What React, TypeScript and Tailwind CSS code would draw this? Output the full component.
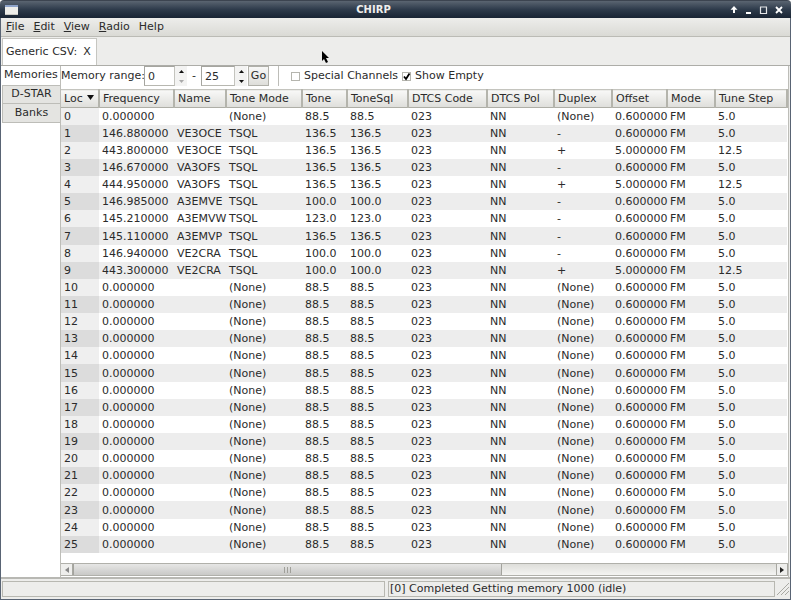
import { useState } from "react";

type Row = string[];

const columns: { label: string; width: string }[] = [
  { label: "Loc", width: "w-[38px]" },
  { label: "Frequency", width: "w-[75px]" },
  { label: "Name", width: "w-[52px]" },
  { label: "Tone Mode", width: "w-[76px]" },
  { label: "Tone", width: "w-[45px]" },
  { label: "ToneSql", width: "w-[61px]" },
  { label: "DTCS Code", width: "w-[79px]" },
  { label: "DTCS Pol", width: "w-[67px]" },
  { label: "Duplex", width: "w-[58px]" },
  { label: "Offset", width: "w-[55px]" },
  { label: "Mode", width: "w-[48px]" },
  { label: "Tune Step", width: "w-auto" },
];

const programmed: Row[] = [
  ["146.880000", "VE3OCE", "136.5", "-"],
  ["443.800000", "VE3OCE", "136.5", "+"],
  ["146.670000", "VA3OFS", "136.5", "-"],
  ["444.950000", "VA3OFS", "136.5", "+"],
  ["146.985000", "A3EMVE", "100.0", "-"],
  ["145.210000", "A3EMVW", "123.0", "-"],
  ["145.110000", "A3EMVP", "136.5", "-"],
  ["146.940000", "VE2CRA", "100.0", "-"],
  ["443.300000", "VE2CRA", "100.0", "+"],
];

const rows: Row[] = Array.from({ length: 26 }, (_, loc) => {
  const p = programmed[loc - 1];
  if (!p) {
    return [String(loc), "0.000000", "", "(None)", "88.5", "88.5", "023", "NN", "(None)", "0.600000", "FM", "5.0"];
  }
  const [freq, name, tone, duplex] = p;
  const up = duplex === "+";
  return [String(loc), freq, name, "TSQL", tone, tone, "023", "NN", duplex, up ? "5.000000" : "0.600000", "FM", up ? "12.5" : "5.0"];
});

function TitleBar() {
  return (
    <header className="flex h-[18px] shrink-0 items-center rounded-t-[4px] border-t border-[#3c4450] bg-linear-to-b from-[#5b6571] via-[#2e3b4b] to-[#192534] pr-[7px] pl-[5px]">
      <svg width="13" height="10" viewBox="0 0 13 10" aria-hidden="true">
        <rect width="13" height="10" fill="#eeeeea" />
        <rect width="13" height="2" fill="#8ea3c9" />
        <rect y="9" width="13" height="1" fill="#c9c9c4" />
      </svg>
      <h1 className="flex-1 pt-px text-center text-[10px] leading-[16px] font-bold text-[#eeeeec]">CHIRP</h1>
      <div className="flex gap-[5px]">
        <button aria-label="Shade" className="size-[10px]">
          <svg width="10" height="10" viewBox="0 0 10 10"><path d="M5 1L8.500 4.800H6V8H4V4.800H1.500z" fill="#fff" /></svg>
        </button>
        <button aria-label="Minimize" className="size-[10px]">
          <svg width="10" height="10" viewBox="0 0 10 10"><path d="M2 7h5v2H2z" fill="#fff" /></svg>
        </button>
        <button aria-label="Maximize" className="size-[10px]">
          <svg width="10" height="10" viewBox="0 0 10 10"><path d="M1 2h7M1.500 2v6.500h6V2" stroke="#e4e6e8" strokeWidth="1.200" fill="none" /></svg>
        </button>
        <button aria-label="Close" className="size-[10px]">
          <svg width="10" height="10" viewBox="0 0 10 10"><path d="M2 2l6 6M8 2L2 8" stroke="#fff" strokeWidth="1.800" /></svg>
        </button>
      </div>
    </header>
  );
}

function Spin({ label, initial, width, low }: { label: string; initial: number; width: string; low?: boolean }) {
  const [value, setValue] = useState(initial);
  return (
    <div className="flex h-5 bg-[#f3f3f2]">
      <input
        aria-label={label}
        value={value}
        onChange={(e) => setValue(Number(e.target.value) || 0)}
        className={"h-5 border border-t-[#a5a59f] border-r-[#c4c4be] border-b-[#b7b7b0] border-l-[#a5a59f] bg-white pl-[3px] text-[11px] outline-none " + width}
      />
      <div className="flex w-3 flex-col">
        <button aria-label={label + " up"} onClick={() => setValue(value + 1)} className="flex h-[10px] items-center justify-center">
          <svg width="5" height="3" viewBox="0 0 5 3"><path d="M0 3L2.500 0L5 3z" fill="#111" /></svg>
        </button>
        <button aria-label={label + " down"} onClick={() => setValue(Math.max(0, value - 1))} className="flex h-[10px] items-center justify-center">
          <svg width="5" height="3" viewBox="0 0 5 3"><path d="M0 0L2.500 3L5 0z" fill={low ? "#aaa" : "#111"} /></svg>
        </button>
      </div>
    </div>
  );
}

function Check({ label, initial }: { label: string; initial: boolean }) {
  const [on, setOn] = useState(initial);
  return (
    <label className="flex items-center gap-1">
      <span className="relative size-[9px]">
        <input
          type="checkbox"
          checked={on}
          onChange={() => setOn(!on)}
          className="block size-[9px] appearance-none border border-[#b5b5ae] bg-white"
        />
        {on && (
          <svg className="pointer-events-none absolute inset-0" width="9" height="9" viewBox="0 0 9 9">
            <path d="M2 4.500L4 7L7.500 1.500" stroke="#000" strokeWidth="1.800" fill="none" />
          </svg>
        )}
      </span>
      <span>{label}</span>
    </label>
  );
}

function MemoryTable() {
  return (
    <table className="w-full table-fixed border-collapse">
      <thead>
        <tr className="h-[18px]">
          {columns.map((c, i) => (
            <th
              key={c.label}
              className={
                "border-t border-r-2 border-b border-t-[#c4c4be] border-r-[#b4b4ac] border-b-[#aeaea6] bg-linear-to-b from-[#f8f8f7] to-[#dededa] p-0 pl-[3px] text-left leading-[16px] font-normal whitespace-nowrap " +
                c.width
              }
            >
              {c.label}
              {i === 0 && (
                <svg className="ml-1 inline-block align-[2px]" width="7" height="5" viewBox="0 0 7 5">
                  <path d="M0 0h7L3.500 5z" fill="#111" />
                </svg>
              )}
            </th>
          ))}
        </tr>
      </thead>
      <tbody>
        {rows.map((r) => (
          <tr key={r[0]} className="h-[17px] even:bg-[#ededed] nth-[8n]:h-[18px]">
            {r.map((v, i) => (
              <td
                key={i}
                className={
                  "p-0 pl-[3px] leading-[17px] whitespace-nowrap " +
                  (i === 0 ? "bg-[#efefef] in-[tr:nth-child(even)]:bg-[#dcdcdc]" : "")
                }
              >
                {v}
              </td>
            ))}
          </tr>
        ))}
      </tbody>
    </table>
  );
}

function ScrollBar() {
  return (
    <div className="flex h-[13px] border-y border-[#b0b0aa] bg-linear-to-b from-[#dededa] to-[#f4f4f2]">
      <button aria-label="Scroll left" className="flex w-3 items-center justify-center border-r border-[#a8a8a2] bg-[#eeeeec]">
        <svg width="4" height="6" viewBox="0 0 4 6"><path d="M4 0v6L0 3z" fill="#888" /></svg>
      </button>
      <div className="flex w-[59%] items-center justify-center gap-[2px] border-x border-[#a3a39d] bg-linear-to-b from-[#e6e6e5] to-[#c9c9c7]">
        <i className="h-[6px] w-px bg-[#a0a09a]" />
        <i className="h-[6px] w-px bg-[#a0a09a]" />
        <i className="h-[6px] w-px bg-[#a0a09a]" />
      </div>
      <button aria-label="Scroll right" className="ml-auto flex w-3 items-center justify-center border-x border-[#a8a8a2] bg-[#eeeeec]">
        <svg width="4" height="6" viewBox="0 0 4 6"><path d="M0 0v6L4 3z" fill="#222" /></svg>
      </button>
    </div>
  );
}

export default function App() {
  return (
    <div className="relative flex min-h-screen flex-col bg-white font-['DejaVu_Sans',sans-serif] text-[11px] text-[#2b2b2b]">
      <TitleBar />
      <div className="flex flex-1 flex-col border-x border-b border-[#596474] bg-[#ededeb]">
        <nav className="flex h-[19px] shrink-0 items-center gap-[9px] border-b border-[#bbbbb5] bg-linear-to-b from-[#ededeb] to-[#dadad5] pt-px pl-[5px]">
          <button><u>F</u>ile</button>
          <button><u>E</u>dit</button>
          <button><u>V</u>iew</button>
          <button><u>R</u>adio</button>
          <button>Help</button>
        </nav>

        <div className="flex h-[29px] shrink-0 items-end border-b border-[#adada8] pl-px">
          <div className="flex h-[27px] items-center gap-[6px] border border-b-0 border-[#c6c6c1] bg-white pr-[5px] pl-[3px]">
            <span>Generic CSV:</span>
            <button aria-label="Close tab">X</button>
          </div>
        </div>

        <main className="mr-px flex flex-1 border-r border-[#bdbdb8] bg-white">
          <div className="flex w-[60px] shrink-0 flex-col border-r border-[#bdbdb8] pl-px">
            <button className="h-[19px] pl-[2px] text-left whitespace-nowrap">Memories</button>
            <button className="h-[19px] border border-r-0 border-[#bdbdb8] bg-[#e4e4e1]">D-STAR</button>
            <button className="h-[19px] border border-t-0 border-r-0 border-[#bdbdb8] bg-[#e4e4e1]">Banks</button>
          </div>
          <div className="flex min-w-0 flex-1 flex-col">
            <div className="flex h-[23px] shrink-0 items-start">
              <div className="flex h-5 items-center whitespace-nowrap">
                <span className="w-[83px]">Memory range:</span>
                <Spin label="Range start" initial={0} width="w-[31px]" low />
                <span className="w-[14px] text-center">-</span>
                <Spin label="Range end" initial={25} width="w-[34px]" />
                <button className="ml-px h-5 w-[21px] border border-[#b0b0a9] bg-linear-to-b from-[#f8f8f7] to-[#dededa]">Go</button>
                <div className="mr-3 ml-[9px] h-5 w-px bg-[#bdbdb8]" />
                <div className="flex gap-1">
                  <Check label="Special Channels" initial={false} />
                  <Check label="Show Empty" initial />
                </div>
              </div>
            </div>
            <MemoryTable />
            <div className="mt-auto pb-px">
              <ScrollBar />
            </div>
          </div>
        </main>

        <footer className="flex h-[22px] shrink-0 items-center border-t-2 border-[#b8b8b3] pb-px pl-px">
          <div className="h-4 w-[383px] shrink border border-[#b8b8b1]" />
          <div className="ml-[3px] h-4 flex-1 border border-[#b8b8b1] pl-px leading-[14px]">[0] Completed Getting memory 1000 (idle)</div>
          <svg className="ml-[2px]" width="13" height="14" viewBox="0 0 13 14">
            <path d="M0 13L12 1M4 13L12 5M8 13L12 9" stroke="#a9a9a3" fill="none" />
          </svg>
        </footer>
      </div>
      <svg className="pointer-events-none absolute top-[51px] left-[322px]" width="8" height="13" viewBox="0 0 8 13" aria-hidden="true">
        <path d="M0 0v10l2-2 2 4 2-1-2-4h3z" fill="#000" />
      </svg>
    </div>
  );
}
